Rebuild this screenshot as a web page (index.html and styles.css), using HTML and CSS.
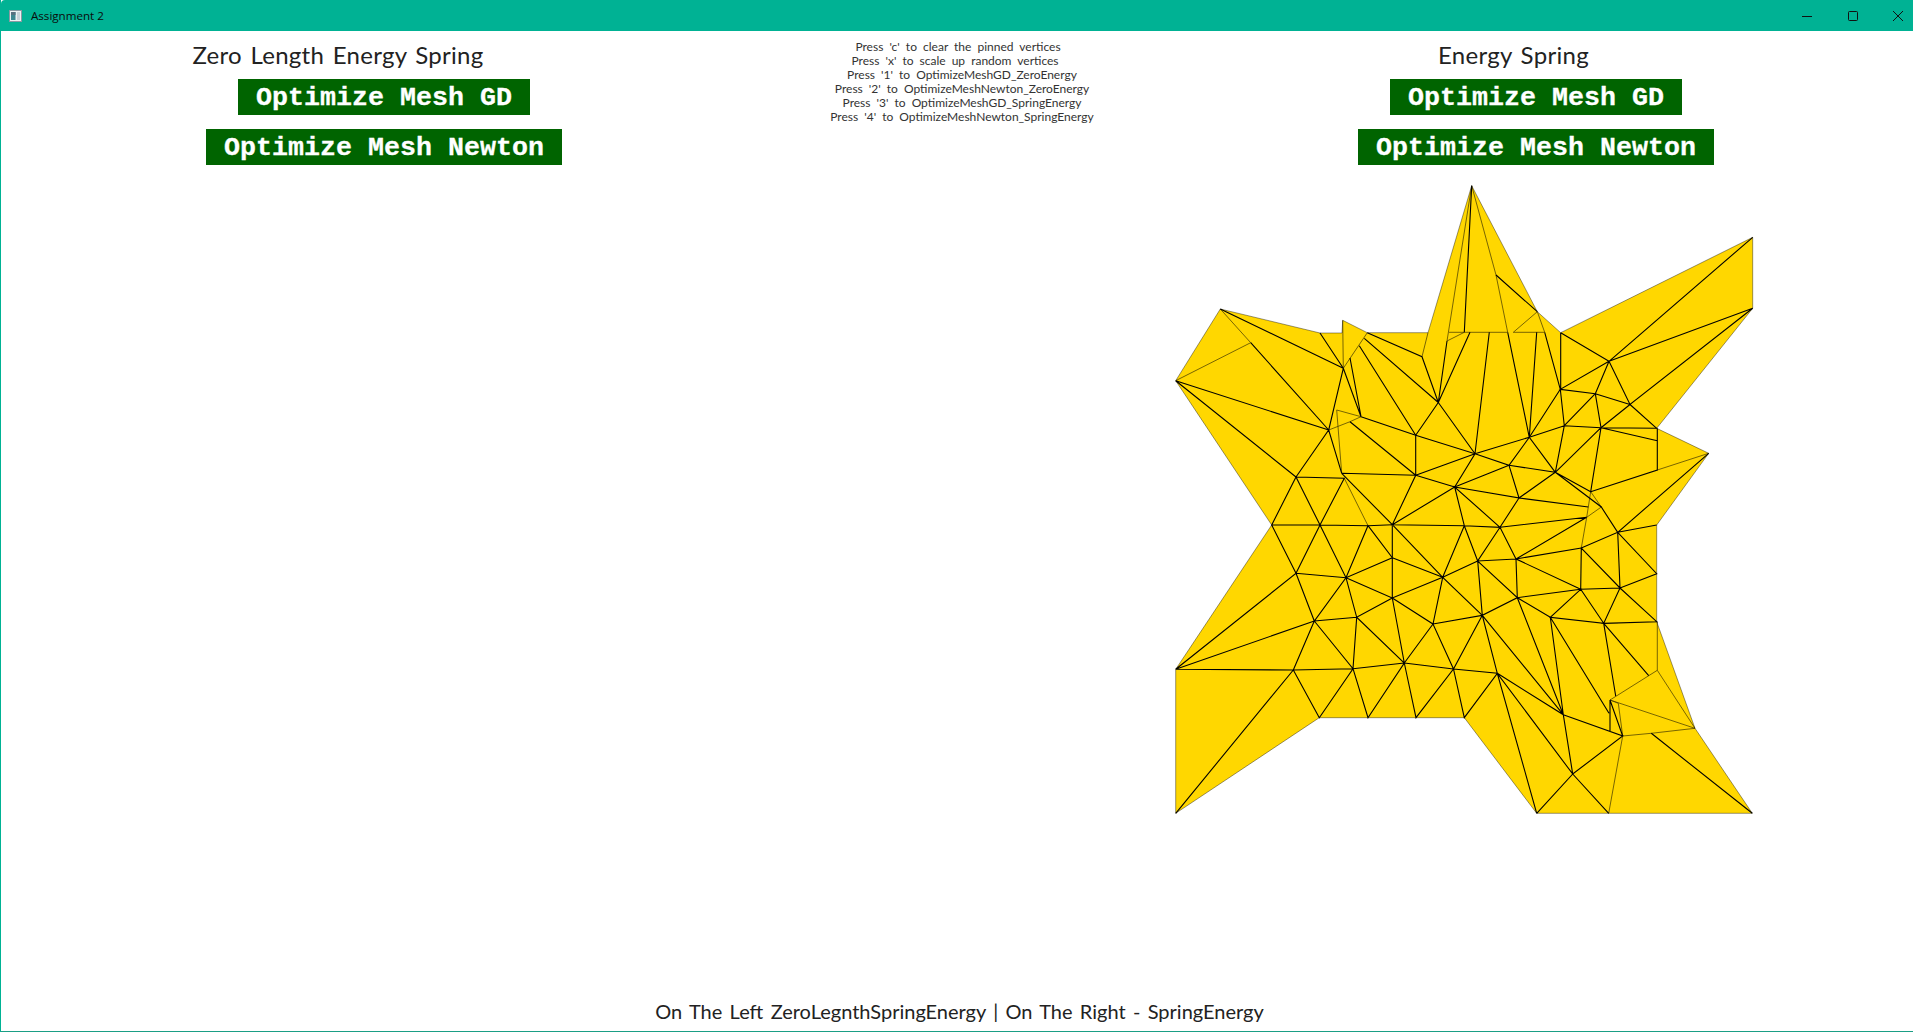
FILE: index.html
```html
<!DOCTYPE html>
<html lang="en">
<head>
<meta charset="utf-8">
<title>Assignment 2</title>
<link rel="stylesheet" href="styles.css">
</head>
<body>
<div class="window">
  <header class="titlebar">
    <svg class="app-icon" viewBox="0 0 13 12" width="13" height="12">
      <rect x="0.5" y="0.5" width="12" height="11" fill="#eef1f3" stroke="#8a9aa3"/>
      <rect x="2" y="2" width="4.5" height="8" fill="#3f8790"/>
      <rect x="2" y="2" width="4.5" height="3" fill="#59707f"/>
      <rect x="8" y="2" width="3" height="8" fill="#c9d2d8"/>
    </svg>
    <span class="app-title">Assignment 2</span>
    <div class="controls">
      <svg viewBox="0 0 10 10" width="10" height="10"><path d="M0 5.5H10" stroke="#111" fill="none"/></svg>
      <svg viewBox="0 0 10 10" width="10" height="10"><rect x="0.5" y="0.5" width="9" height="9" rx="1" stroke="#111" fill="none"/></svg>
      <svg viewBox="0 0 10 10" width="10" height="10"><path d="M0 0L10 10M10 0L0 10" stroke="#111" fill="none"/></svg>
    </div>
  </header>
  <main class="stage">
    <section class="panel">
      <h2 class="panel-title title-left">Zero Length Energy Spring</h2>
      <button class="action">Optimize Mesh GD</button>
      <button class="action">Optimize Mesh Newton</button>
    </section>
    <section class="help">
      <p class="l1">Press 'c' to clear the pinned vertices</p>
      <p class="l2">Press 'x' to scale up random vertices</p>
      <p class="l3">Press '1' to OptimizeMeshGD_ZeroEnergy</p>
      <p class="l3">Press '2' to OptimizeMeshNewton_ZeroEnergy</p>
      <p class="l3">Press '3' to OptimizeMeshGD_SpringEnergy</p>
      <p class="l3">Press '4' to OptimizeMeshNewton_SpringEnergy</p>
    </section>
    <section class="panel">
      <h2 class="panel-title title-right">Energy Spring</h2>
      <button class="action">Optimize Mesh GD</button>
      <button class="action">Optimize Mesh Newton</button>
    </section>
  </main>
  <svg class="mesh" viewBox="1170 180 590 640" width="590" height="640">
    <path class="mesh-fill" d="M1220.3 309L1320 333H1342L1342.7 320.3L1367.3 332.7H1428L1471.7 185.7L1537.3 311.7L1560.7 332.7L1752.7 237.3V308.3L1656.7 428.3L1708.7 453.3L1656.7 525V621.7L1695 728.3L1752.3 813.3H1536.7L1464.3 717.7H1319.3L1175.7 813.3V669.3L1271.7 525L1175.7 380.7Z"/>
    <path class="edge-thin" d="M1220.3 309L1250.7 342.7M1175.7 380.7L1250.7 342.7M1342.7 320.3L1343.3 368.3L1367.3 332.7M1428 332.7L1422 356.7M1447 341L1471.7 185.7M1447 341L1464.3 332.3M1449 332.3H1507.7M1513.3 332.3H1544.7M1513.3 332.3L1537.3 311.7M1471.7 185.7L1496 275L1507.7 332.3M1537.3 311.7L1544.7 332.3M1328.7 430L1350 421.7L1361 416.7L1336.7 410L1341.7 473.3M1657.3 470L1708.7 453.3M1590.7 491.7L1588.3 507L1586.7 517.3L1581.3 548M1590.7 491.7L1601.3 507L1586.7 517.3M1344.3 478.3L1368 525.7M1610 700L1657.3 670.3M1610 700L1618.3 703.3L1622.7 736L1651.3 733.3L1695 728.3L1610 700M1622.7 736L1608.7 813.3M1657.3 670.3V621.7M1657.3 670.3L1695 728.3"/>
    <path class="edge" d="M1220.3 309L1343.3 368.3M1320 333L1343.3 368.3M1250.7 342.7L1328.7 430M1175.7 380.7L1328.7 430M1175.7 380.7L1296 477M1343.3 368.3L1328.7 430M1343.3 368.3L1361 416.7M1350 358L1361 416.7M1364.3 338.3L1438.3 402.5M1359.3 345.7L1415.7 435.3M1367.3 332.7L1422 356.7L1438.3 402.5L1447 341M1438.3 402.5L1470 332.3M1438.3 402.5L1415.7 435.3M1438.3 402.5L1475 453.7M1464.3 332.3L1471.7 185.7M1489.3 332.3L1475 453.7M1507.7 332.3L1529.3 437.3M1536.7 332.3L1529.3 437.3M1496 275L1537.3 311.7M1544.7 332.3L1560.3 389.3M1560.7 332.7V389.3M1560.7 332.7L1609 361.3L1560.3 389.3L1595.3 393.7L1630 404.5M1609 361.3L1752.7 237.3M1609 361.3L1752.7 308.3M1609 361.3L1595.3 393.7M1609 361.3L1630 404.5L1752.7 308.3M1560.3 389.3L1529.3 437.3M1560.3 389.3L1564.3 425.7M1595.3 393.7L1564.3 425.7M1595.3 393.7L1601 427.7M1630 404.5L1601 427.7M1630 404.5L1656.7 428.3"/>
    <path class="edge" d="M1361 416.7L1415.7 435.3M1350 421.7L1415.7 475.3M1341.7 473.3L1415.7 475.3M1415.7 435.3V475.3L1392.3 524.7M1415.7 475.3L1454.7 487M1415.7 475.3L1475 453.7M1415.7 435.3L1475 453.7L1454.7 487M1475 453.7L1509 465.3L1529.3 437.3L1475 453.7M1509 465.3L1555.3 472.3L1529.3 437.3L1564.3 425.7L1601 427.7L1656.7 428.3M1509 465.3L1454.7 487M1509 465.3L1519 498M1555.3 472.3L1519 498M1555.3 472.3L1564.3 425.7M1555.3 472.3L1601 427.7M1601 427.7L1657.3 440.7M1601 427.7L1590.7 491.7L1657.3 470V428.3M1555.3 472.3L1590.7 491.7M1555.3 472.3L1601.3 507L1617.7 532.3L1708.7 453.3M1617.7 532.3L1656.7 525M1454.7 487L1519 498L1588.3 507M1500 527.3L1586.7 517.3M1516 559L1586.7 517.3M1516 559L1581.3 548L1617.7 532.3L1620 588L1581.3 548L1580.7 589.3L1620 588L1656.7 573.7L1617.7 532.3M1620 588L1656.7 621.7L1603.7 623.3L1620 588M1580.7 589.3L1603.7 623.3L1550.3 617.3L1580.7 589.3L1517.3 597.7L1516 559L1580.7 589.3M1516 559L1500 527.3L1477.7 561L1516 559L1517.3 597.7L1477.7 561L1482.3 615.3L1517.3 597.7L1550.3 617.3M1477.7 561L1442.7 577.3M1477.7 561L1464.3 525.7L1442.7 577.3M1464.3 525.7L1500 527.3L1454.7 487L1464.3 525.7L1392.3 524.7L1454.7 487M1500 527.3L1519 498L1454.7 487M1392.3 524.7L1442.7 577.3M1392.3 524.7V557.7M1392.3 524.7L1341.7 473.3"/>
    <path class="edge" d="M1296 477L1344.3 478.3L1320 525L1271.7 525L1296 477L1320 525L1368 525.7L1392.3 524.7M1296 477L1328.7 430L1341.7 473.3M1271.7 525L1296 573.3L1320 525L1346 577.7L1368 525.7L1392.3 557.7L1346 577.7L1296 573.3L1175.7 669.3M1392.3 557.7L1442.7 577.3L1392.3 598L1392.3 557.7M1346 577.7L1392.3 598L1356.7 617.3L1346 577.7L1314.3 621L1296 573.3M1314.3 621L1356.7 617.3M1392.3 598L1433 624L1442.7 577.3L1482.3 615.3L1433 624M1392.3 598L1404.3 663L1433 624L1453.5 669L1482.3 615.3L1497.3 673.3M1442.7 577.3L1482.3 615.3M1314.3 621L1175.7 669.3L1293.3 670L1353 668.7L1404.3 663L1453.5 669L1497.3 673.3L1536.7 813.3M1314.3 621L1293.3 670L1319.3 717.7L1353 668.7L1314.3 621M1293.3 670L1175.7 813.3M1353 668.7L1356.7 617.3L1404.3 663L1368 717.7L1353 668.7M1404.3 663L1416 717.7L1453.5 669L1464.3 717.7L1497.3 673.3L1572.7 774L1536.7 813.3M1497.3 673.3L1563.3 714.7L1572.7 774L1622.7 736L1563.3 714.7M1482.3 615.3L1563.3 714.7M1517.3 597.7L1563.3 714.7M1550.3 617.3L1563.3 714.7M1550.3 617.3L1609 713.3M1603.7 623.3L1615.7 696M1603.7 623.3L1648.7 675.7M1572.7 774L1608.7 813.3M1610 700V731.7M1610 700L1622.7 736M1651.3 733.3L1752.3 813.3"/>
    <path class="outline" d="M1220.3 309L1320 333H1342L1342.7 320.3L1367.3 332.7H1428L1471.7 185.7L1537.3 311.7L1560.7 332.7L1752.7 237.3V308.3L1656.7 428.3L1708.7 453.3L1656.7 525V621.7L1695 728.3L1752.3 813.3H1536.7L1464.3 717.7H1319.3L1175.7 813.3V669.3L1271.7 525L1175.7 380.7Z"/>
  </svg>
  <footer class="status">On The Left ZeroLegnthSpringEnergy | On The Right - SpringEnergy</footer>
</div>
</body>
</html>
```

FILE: styles.css
```css
* { box-sizing: border-box; }
html, body { margin: 0; height: 100%; background: #fff; overflow: hidden; }
.window {
  height: 1032px;
  display: flex;
  flex-direction: column;
  border-left: 1px solid #00b294;
  border-bottom: 1px solid #1a9e85;
  font-family: "Lato", sans-serif;
  color: #1a1a1a;
}
.titlebar {
  flex: none;
  height: 31px;
  background: #00b294;
  display: flex;
  align-items: center;
  padding-left: 8px;
  border-top-left-radius: 4px;
}
.app-icon { flex: none; margin-right: 9px; }
.app-title { font: 11.6px "Open Sans", sans-serif; color: #0b0b0b; }
.controls {
  margin-left: auto;
  display: flex;
  gap: 35.5px;
  padding-right: 10px;
  align-items: center;
}
.controls svg { display: block; }
.stage {
  flex: none;
  display: grid;
  grid-template-columns: 766px 1fr 754px;
}
.panel {
  display: flex;
  flex-direction: column;
  align-items: center;
}
.panel-title {
  margin: 10px 0 2px;
  font-size: 24px;
  font-weight: 400;
  line-height: 27px;
  word-spacing: 2px;
  letter-spacing: 0.3px;
  color: #222;
}
.title-left { margin-right: 92px; }
.title-right { margin-right: 45px; }
.action {
  display: block;
  height: 36px;
  margin: 9px 0 5px;
  padding: 1px 18px 0;
  border: 0;
  background: #006400;
  color: #fff;
  font: bold 26.67px "Liberation Mono", monospace;
  -webkit-text-stroke: 0.3px #fff;
}
.action + .action { margin-top: 9px; }
.help {
  padding-top: 9px;
  display: flex;
  flex-direction: column;
  align-items: center;
  font-size: 12px;
  line-height: 14px;
  color: #333;
  word-spacing: 3px;
}
.help p { margin: 0; }
.help .l1 { margin-right: 10px; }
.help .l2 { margin-right: 16px; }
.help .l3 { margin-right: 2px; }
.mesh {
  flex: none;
  display: block;
  align-self: flex-end;
  margin: 10px 153px 0 0;
}
.mesh-fill { fill: #ffd700; stroke: none; }
.edge { fill: none; stroke: #000; stroke-width: 1.1; }
.edge-thin { fill: none; stroke: #3d3300; stroke-width: 0.7; }
.outline { fill: none; stroke: #000; stroke-width: 0.4; }
.status {
  margin-top: auto;
  height: 32px;
  text-align: center;
  font-size: 20px;
  font-weight: 400;
  line-height: 24px;
  word-spacing: 2.2px;
  padding-left: 5px;
  color: #222;
}
```
